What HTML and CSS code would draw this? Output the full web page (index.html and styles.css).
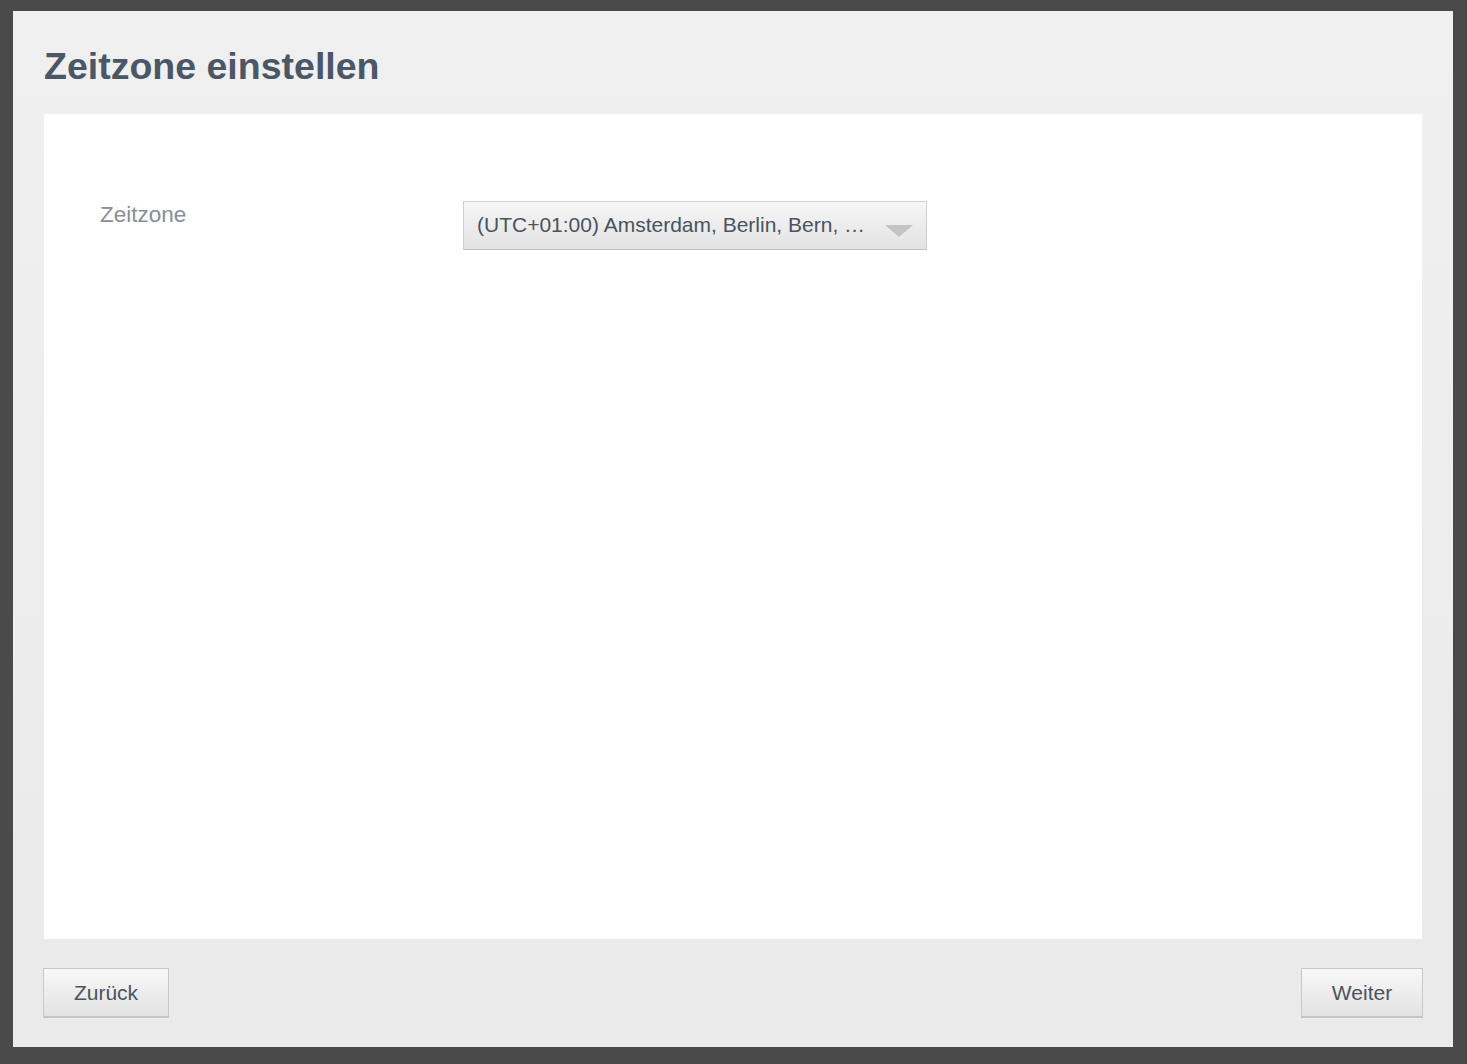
FILE: index.html
```html
<!DOCTYPE html>
<html lang="de">
<head>
<meta charset="utf-8">
<title>Zeitzone einstellen</title>
<link rel="stylesheet" href="styles.css">
</head>
<body>
<div class="panel">
  <header class="header">
    <h1 class="title">Zeitzone einstellen</h1>
  </header>
  <main class="content">
    <div class="row">
      <div class="label">Zeitzone</div>
      <div class="select">
        <span class="select-text">(UTC+01:00) Amsterdam, Berlin, Bern, …</span>
        <svg class="arrow" width="28" height="14" viewBox="0 0 28 14"><polygon points="0,1 28,1 14,13" fill="#c4c4c4"/></svg>
      </div>
    </div>
  </main>
  <footer class="footer">
    <button class="btn btn-back">Zurück</button>
    <button class="btn btn-next">Weiter</button>
  </footer>
</div>
</body>
</html>
```
FILE: styles.css
```css
html, body {
  margin: 0;
  padding: 0;
}
body {
  background: #4a4a4a;
  font-family: "Liberation Sans", Arial, sans-serif;
  padding: 11px 14px 17px 13px;
}
.panel {
  width: 1440px;
  height: 1036px;
  box-sizing: border-box;
  background: linear-gradient(#f0f0f0, #eaeaea);
  padding: 0 30px 0 31px;
  display: flex;
  flex-direction: column;
}
.header {
  height: 103px;
  box-sizing: border-box;
  padding-top: 34px;
}
.title {
  margin: 0;
  font-size: 37.5px;
  line-height: 42px;
  font-weight: bold;
  color: #4b5667;
}
.content {
  background: #ffffff;
  height: 825px;
  margin-right: 1px;
  box-sizing: border-box;
  padding: 87px 0 0 56px;
}
.row {
  display: flex;
  align-items: flex-start;
}
.label {
  width: 363px;
  font-size: 22.5px;
  color: #878e98;
  padding-top: 2px;
  line-height: 24px;
}
.select {
  width: 464px;
  height: 49px;
  box-sizing: border-box;
  border: 1px solid #cfcfcf;
  border-bottom-color: #bdbdbd;
  background: linear-gradient(#f6f6f6, #e3e3e3);
  display: flex;
  align-items: center;
  padding: 0 13px 0 13px;
  justify-content: space-between;
}
.select-text {
  font-size: 21px;
  color: #4a5360;
  white-space: nowrap;
  margin-top: -2px;
}
.arrow {
  margin-top: 10px;
}
.footer {
  display: flex;
  justify-content: space-between;
  padding-top: 29px;
}
.btn {
  height: 50px;
  box-sizing: border-box;
  border: 1px solid #c8c8c8;
  border-bottom: 2px solid #c4c4c4;
  background: linear-gradient(#f8f8f8, #e2e2e2);
  font-family: "Liberation Sans", Arial, sans-serif;
  font-size: 21px;
  color: #4a5360;
  padding: 0;
  margin: 0;
}
.btn-back {
  width: 126px;
  margin-left: -1px;
}
.btn-next {
  width: 122px;
}
```
